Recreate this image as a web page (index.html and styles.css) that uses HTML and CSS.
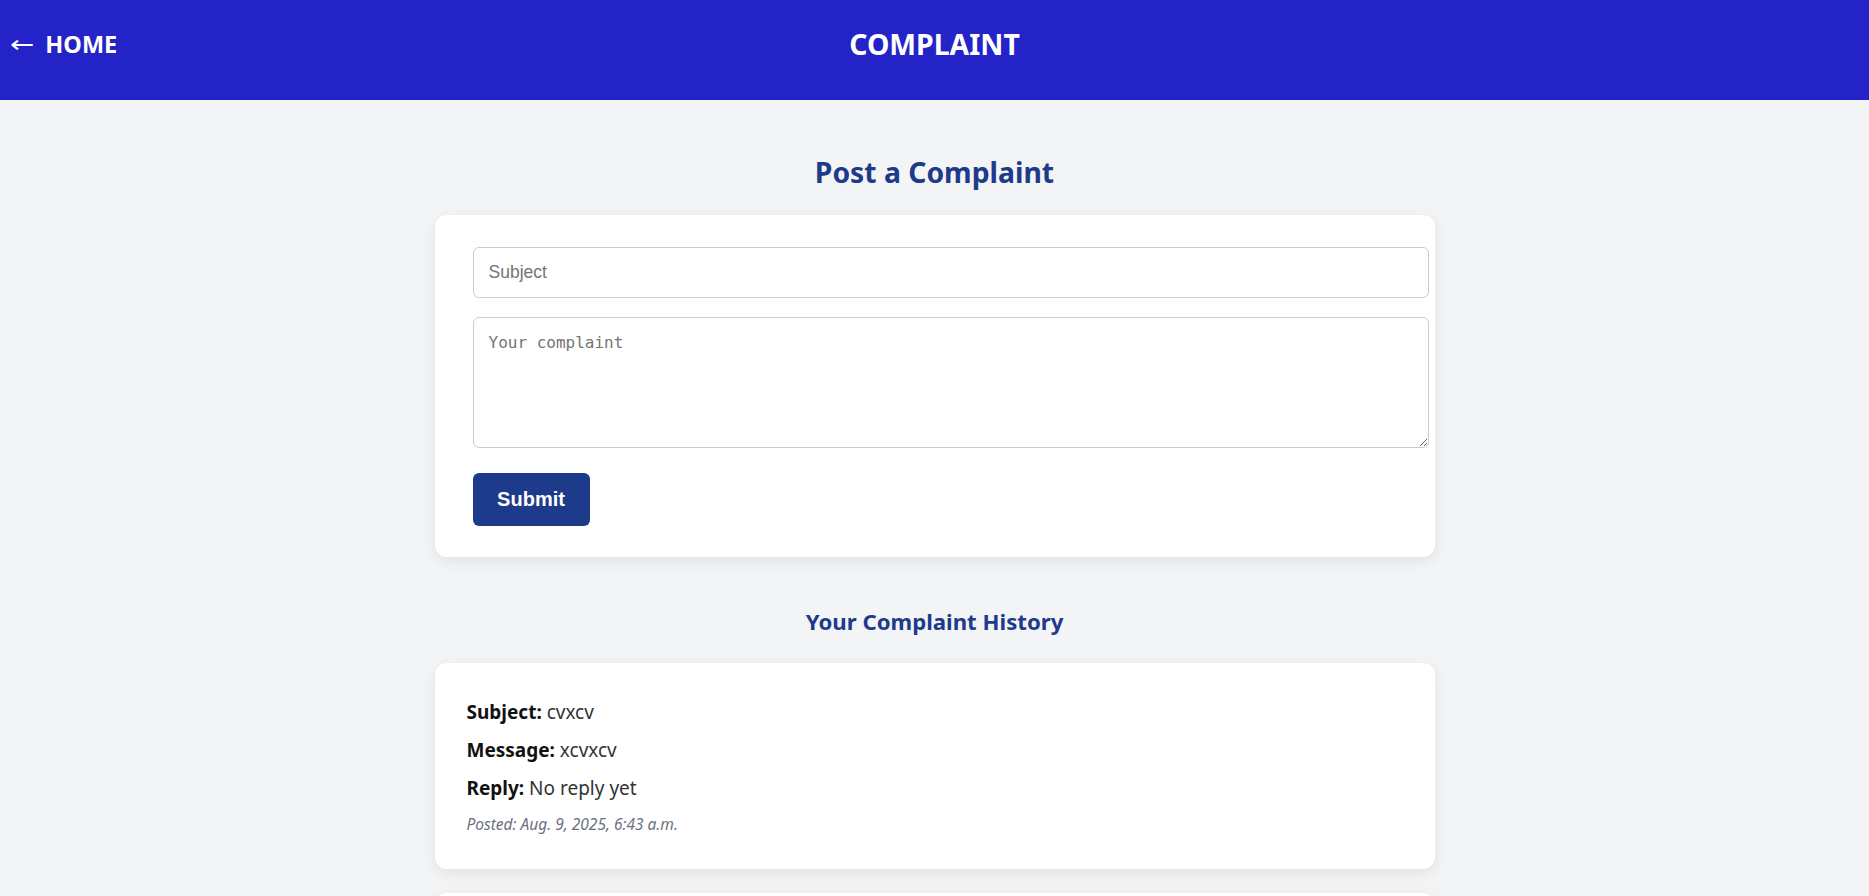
FILE: index.html
```html
<!DOCTYPE html>
<html lang="en">
<head>
<meta charset="utf-8">
<title>Complaint</title>
<link rel="stylesheet" href="styles.css">
</head>
<body>
<header class="topbar">
  <a class="home-link" href="#"><span class="home-arrow">&larr;</span> HOME</a>
  <h1 class="topbar-title">COMPLAINT</h1>
  <span class="topbar-spacer"></span>
</header>

<main class="page">
  <h2 class="section-title">Post a Complaint</h2>
  <form class="card form-card">
    <input class="field" type="text" placeholder="Subject">
    <textarea class="field field-area" placeholder="Your complaint"></textarea>
    <button class="submit-btn" type="button">Submit</button>
  </form>

  <h3 class="history-title">Your Complaint History</h3>
  <section class="card history-card">
    <p class="line"><strong>Subject:</strong> cvxcv</p>
    <p class="line"><strong>Message:</strong> xcvxcv</p>
    <p class="line"><strong>Reply:</strong> No reply yet</p>
    <p class="posted">Posted: Aug. 9, 2025, 6:43 a.m.</p>
  </section>
  <section class="card history-card">
    <p class="line"><strong>Subject:</strong> test</p>
    <p class="line"><strong>Message:</strong> test</p>
    <p class="line"><strong>Reply:</strong> No reply yet</p>
    <p class="posted">Posted: Aug. 9, 2025, 6:40 a.m.</p>
  </section>
</main>
</body>
</html>
```

FILE: styles.css
```css
* {
  box-sizing: content-box;
}

body {
  margin: 0;
  background: #f3f4f6;
  font-family: "Noto Sans", "Open Sans", sans-serif;
  color: #222;
}

.topbar {
  height: 100px;
  background: #2323c8;
  display: grid;
  grid-template-columns: 1fr auto 1fr;
  align-items: center;
  padding: 0 10px;
  box-sizing: border-box;
}

.home-link {
  color: #fff;
  text-decoration: none;
  font-weight: 700;
  font-size: 23.5px;
  padding-bottom: 12px;
  justify-self: start;
  display: flex;
  align-items: center;
  gap: 11px;
}

.home-arrow {
  font-family: "DejaVu Sans", sans-serif;
  font-weight: 400;
  font-size: 29px;
  line-height: 1;
  transform: scaleY(0.8);
}

.topbar-title {
  margin: 0;
  color: #fff;
  font-size: 28.4px;
  font-weight: 700;
  padding-bottom: 12px;
}

.page {
  width: 1000px;
  margin: 0 auto;
  padding-top: 52px;
}

.section-title {
  margin: 0 0 23px;
  text-align: center;
  color: #1e3a8a;
  font-size: 28.3px;
  line-height: 40px;
  font-weight: 700;
}

.card {
  background: #fff;
  border-radius: 12px;
  box-shadow: 0 4px 14px rgba(0, 0, 0, 0.08);
}

.form-card {
  display: flex;
  flex-direction: column;
  align-items: flex-start;
  padding: 32px 38px 31px;
}

.field {
  width: 100%;
  padding: 15px;
  border: 1px solid #ccc;
  border-radius: 6px;
  font-family: "Liberation Sans", Arial, sans-serif;
  font-size: 17.5px;
  line-height: 19px;
  color: #222;
  background: #fff;
  margin: 0;
}

.field::placeholder {
  color: #757575;
}

.field-area {
  margin-top: 19px;
  height: 99px;
  font-family: "DejaVu Sans Mono", monospace;
  font-size: 16px;
  resize: vertical;
}

.submit-btn {
  box-sizing: border-box;
  margin-top: 25px;
  padding: 0;
  background: #1e3a8a;
  color: #fff;
  border: 0;
  border-radius: 6px;
  width: 117px;
  height: 53px;
  font-family: "Liberation Sans", Arial, sans-serif;
  font-size: 20px;
  font-weight: 700;
  cursor: pointer;
}

.history-title {
  margin: 50px 0 26px;
  text-align: center;
  color: #1e3a8a;
  font-size: 22.2px;
  line-height: 30px;
  font-weight: 700;
}

.history-card {
  padding: 37px 32px 35px;
  margin-bottom: 24px;
}

.line {
  margin: 0 0 14px;
  font-size: 19px;
  line-height: 24px;
  color: #333;
}

.line strong {
  color: #111;
}

.posted {
  margin: 0;
  font-size: 15.5px;
  line-height: 20px;
  font-style: italic;
  color: #6b7280;
}
```
